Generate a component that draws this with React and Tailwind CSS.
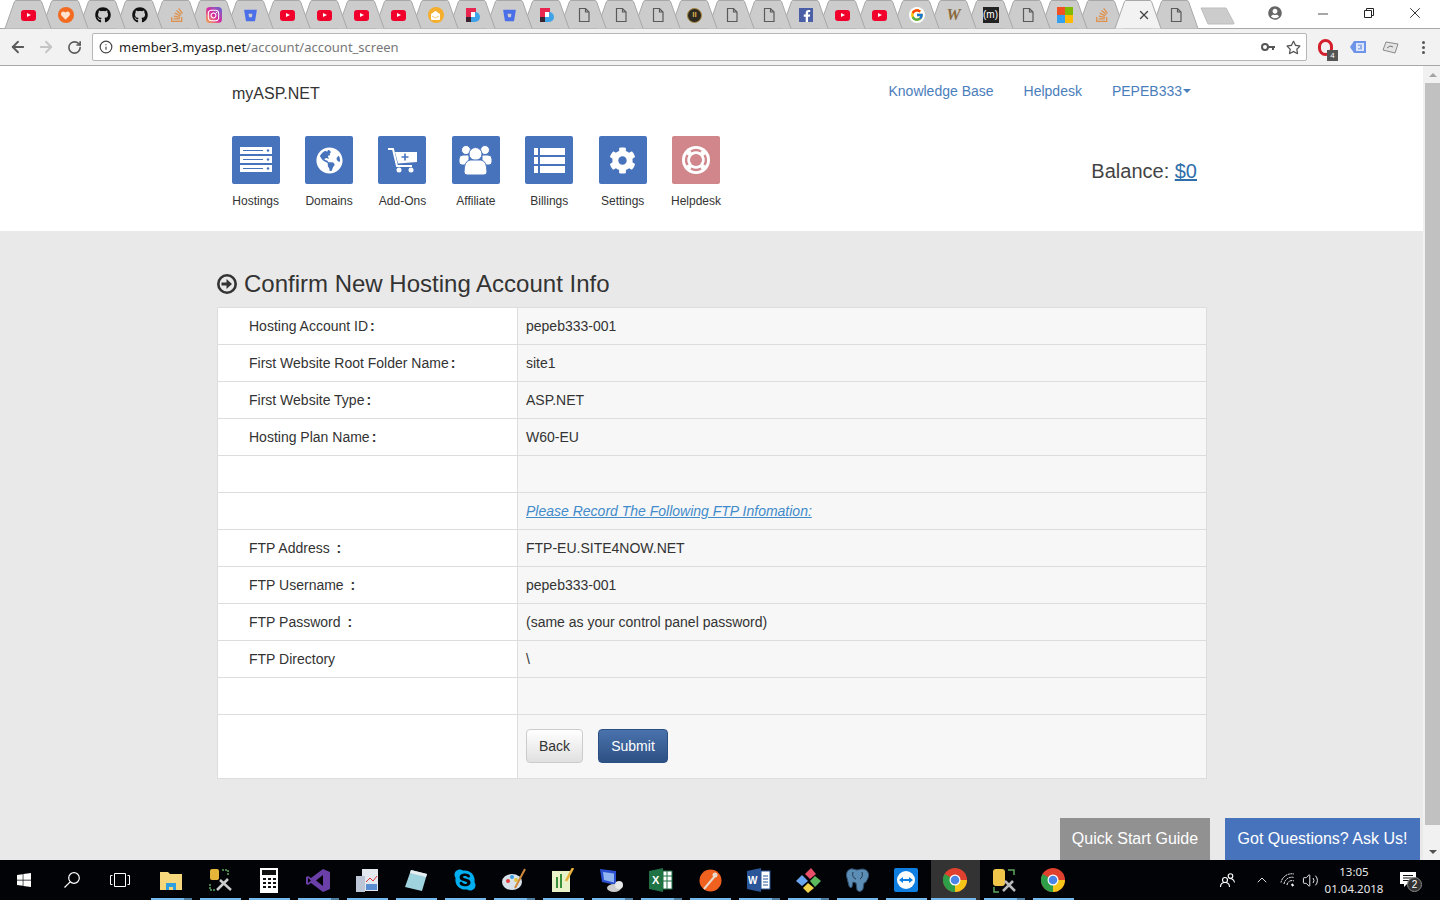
import { FaGithub, FaStackOverflow, FaInstagram, FaBitbucket, FaFacebookF, FaWindows, FaSkype, FaGlobeAmericas, FaCog, FaRegStar, FaUserCircle, FaHeart, FaEnvelopeOpen } from "react-icons/fa";
import { FcGoogle } from "react-icons/fc";
import { ArrowLeft, ArrowRight, RotateCw, Info, X, Minus, Volume2, ChevronUp } from "lucide-react";

// favicons for the tab strip
function Doc() {
  return (
    <svg width="16" height="16" viewBox="0 0 16 16" fill="none" stroke="#5a5a5a" strokeWidth="1.2">
      <path d="M3.5 1.5h6l3.5 3.5v9.5h-9.5z M9.5 1.5v3.5h3.5" />
    </svg>
  );
}

function Yt() {
  return (
    <div className="w-[15px] h-[11px] rounded-[3px] bg-[#f0002b] flex items-center justify-center">
      <div className="w-0 h-0 border-y-[2.5px] border-y-transparent border-l-[4px] border-l-white" />
    </div>
  );
}

function Dpd() {
  return (
    <svg width="16" height="16" viewBox="0 0 16 16">
      <rect x="1" y="1" width="10" height="9" fill="#e8264f" />
      <rect x="1" y="10" width="5" height="5" fill="#3a2430" />
      <path d="M6 5h4a5 5 0 0 1 0 10H6z" fill="#3fa3e8" />
      <rect x="6" y="5" width="4" height="5" fill="#fff" />
    </svg>
  );
}

function Favicon({ kind }) {
  if (kind === "yt") return <Yt />;
  if (kind === "doc") return <Doc />;
  if (kind === "dpd") return <Dpd />;
  if (kind === "gh") return <FaGithub size={16} className="text-[#111]" />;
  if (kind === "so") return <FaStackOverflow size={16} className="text-[#e0904a]" />;
  if (kind === "ig")
    return (
      <div className="w-4 h-4 rounded-[4px] bg-gradient-to-tr from-[#f7a32b] via-[#d6249f] to-[#4f5bd5] flex items-center justify-center">
        <FaInstagram size={13} className="text-white" />
      </div>
    );
  if (kind === "bb") return <FaBitbucket size={13} className="text-[#4a6fe8]" />;
  if (kind === "fb")
    return (
      <div className="w-[14px] h-[14px] bg-[#4a5fa5] flex items-end justify-end">
        <FaFacebookF size={12} className="text-white" />
      </div>
    );
  if (kind === "g")
    return (
      <div className="w-4 h-4 rounded-full bg-white flex items-center justify-center">
        <FcGoogle size={14} />
      </div>
    );
  if (kind === "heart")
    return (
      <div className="w-4 h-4 rounded-full bg-[#f26b21] flex items-center justify-center">
        <FaHeart size={9} className="text-[#ffe3cf]" />
      </div>
    );
  if (kind === "mail")
    return (
      <div className="w-4 h-4 rounded-full bg-[#f5ae2d] flex items-center justify-center">
        <FaEnvelopeOpen size={9} className="text-white" />
      </div>
    );
  if (kind === "coin")
    return (
      <div className="w-[15px] h-[15px] rounded-full bg-[#2d2a22] border border-[#a98a3a] flex items-center justify-center text-[8px] text-[#d8b24a] font-bold">
        II
      </div>
    );
  if (kind === "w")
    return <span className="text-[16px] leading-4 font-bold italic text-[#8a6a3c] [font-family:'Liberation_Serif',serif]">W</span>;
  if (kind === "m")
    return (
      <div className="w-4 h-4 bg-[#222] text-white text-[10px] leading-4 text-center [font-family:'Liberation_Sans',sans-serif]">(m)</div>
    );
  if (kind === "ms")
    return (
      <div className="grid grid-cols-2 w-4 h-4">
        <div className="bg-[#f25022]" />
        <div className="bg-[#7fba00]" />
        <div className="bg-[#33a0f0]" />
        <div className="bg-[#ffb900]" />
      </div>
    );
  return null;
}

const tabs = ["yt", "heart", "gh", "gh", "so", "ig", "bb", "yt", "yt", "yt", "yt", "mail", "dpd", "bb", "dpd", "doc", "doc", "doc", "coin", "doc", "doc", "fb", "yt", "yt", "g", "w", "m", "doc", "ms", "so", "active", "doc"];

function Tab({ kind, index }) {
  const active = kind === "active";
  return (
    <div className="relative w-[37px] h-[28px] flex items-center justify-center shrink-0" style={{ zIndex: active ? 60 : 50 - index }}>
      <svg className="absolute top-0 left-[-5px] overflow-visible" width="47" height="29" viewBox="0 0 47 29">
        <path d="M0 28.5 L9.5 1.5 Q10 0.5 11 0.5 H35 Q36 0.5 36.5 1.5 L46 28.5" fill={active ? "#f2f2f2" : "#cccccc"} stroke="#a8a8a8" />
      </svg>
      <div className="relative mt-[2px]">
        {active ? <X size={14} strokeWidth={2.4} className="ml-[10px] text-[#444]" /> : <Favicon kind={kind} />}
      </div>
    </div>
  );
}

function TabStrip() {
  return (
    <div className="h-[28px] shrink-0 bg-white flex items-start relative">
      <div className="flex pl-[10px]">
        {tabs.map((t, i) => (
          <Tab key={i} kind={t} index={i} />
        ))}
      </div>
      <svg className="ml-[6px] mt-[7px]" width="36" height="18" viewBox="0 0 36 18">
        <path d="M1 1 H26 L34 16 Q34.5 17 33 17 H8 Z" fill="#cccccc" stroke="#bdbdbd" strokeLinejoin="round" />
      </svg>
      <div className="flex-1 flex items-start justify-end text-[#444]">
        <FaUserCircle size={14} className="text-[#666] mt-[6px] mr-[33px]" />
        <Minus size={16} strokeWidth={1.2} className="mt-[6px] mr-[33px] text-[#222]" />
        <svg className="mt-[8px] mr-[32px]" width="10" height="10" viewBox="0 0 10 10" fill="none" stroke="#222">
          <path d="M0.5 2.5h7v7h-7z M2.5 2.5v-2h7v7h-2" />
        </svg>
        <X size={18} strokeWidth={1.2} className="mt-[4px] mr-[16px] text-[#222]" />
      </div>
    </div>
  );
}

function Toolbar() {
  return (
    <div className="h-[38px] shrink-0 bg-[#f2f2f2] border-y border-[#a8a8a8] flex items-center">
      <ArrowLeft size={18} strokeWidth={2.4} className="ml-[9px] text-[#5a5a5a]" />
      <ArrowRight size={18} strokeWidth={2.4} className="ml-[10px] text-[#c4c4c4]" />
      <RotateCw size={15} strokeWidth={2.6} className="ml-[12px] text-[#5a5a5a]" />
      <div className="ml-[10px] w-[1215px] h-[28px] bg-white border border-[#b6b6b6] rounded-[2px] flex items-center">
        <Info size={14} strokeWidth={2} className="ml-[6px] text-[#444]" />
        <div className="ml-[6px] mt-[1px] flex-1 text-[13px] text-[#222] [font-family:'Noto_Sans',sans-serif]">
          member3.myasp.net<span className="text-[#777]">/account/account_screen</span>
        </div>
        <svg className="mr-[10px]" width="14" height="8" viewBox="0 0 14 8">
          <circle cx="4" cy="4" r="3" fill="none" stroke="#555" strokeWidth="2" />
          <path d="M7 3h7v2h-1v2h-2V5H7z" fill="#555" />
        </svg>
        <FaRegStar size={15} className="text-[#555] mr-[5px] ml-[1px]" />
      </div>
      <div className="relative ml-[11px] w-[15px] h-[17px] rounded-full border-[3px] border-[#d3202c]">
        <div className="absolute left-[6px] top-[8px] w-[11px] h-[11px] bg-[#555] text-white text-[8px] leading-[11px] text-center">4</div>
      </div>
      <svg className="ml-[17px]" width="16" height="12" viewBox="0 0 16 12">
        <path d="M4 0h12v12H4L0 6z" fill="#6d94e8" />
        <rect x="6" y="2" width="8" height="8" fill="#dfe8fb" />
        <path d="M9 3.500v1.500M9 7v1.500M11 3.500v5" stroke="#4a74d0" />
      </svg>
      <svg className="ml-[16px]" width="17" height="13" viewBox="0 0 17 13">
        <path d="M4 1 L16 3 L13 12 L1 9 Z" fill="#e4e4e4" stroke="#8a8a8a" />
        <path d="M5 7 L8 5 L11 6" fill="none" stroke="#777" />
      </svg>
      <div className="ml-[23px] flex flex-col gap-[2px]">
        <div className="w-[3px] h-[3px] rounded-full bg-[#555]" />
        <div className="w-[3px] h-[3px] rounded-full bg-[#555]" />
        <div className="w-[3px] h-[3px] rounded-full bg-[#555]" />
      </div>
    </div>
  );
}

function ServerIcon() {
  return (
    <svg width="32" height="26" viewBox="0 0 32 26">
      {[0, 9, 18].map((y) => (
        <g key={y}>
          <rect x="0" y={y} width="32" height="7" fill="#fff" />
          <rect x="3" y={y + 3} width="20" height="1" fill="#4773bd" />
          <circle cx="28" cy={y + 3.5} r="1.2" fill="#4773bd" />
        </g>
      ))}
    </svg>
  );
}

function ListIcon() {
  return (
    <svg width="31" height="25" viewBox="0 0 31 25" fill="#fff">
      {[0, 9, 18].map((y) => (
        <g key={y}>
          <rect x="0" y={y} width="4" height="7" />
          <rect x="6" y={y} width="25" height="7" />
        </g>
      ))}
    </svg>
  );
}

function CartIcon() {
  return (
    <svg width="29" height="25" viewBox="0 0 29 25">
      <path d="M0 1h5l4 17h15" fill="none" stroke="#fff" strokeWidth="2" />
      <path d="M7 4h22v10l-19 1.500z" fill="#fff" />
      <path d="M17 5.500v7M13.500 9h7" stroke="#4773bd" strokeWidth="1.6" />
      <circle cx="11" cy="22" r="2.500" fill="#fff" />
      <circle cx="23" cy="22" r="2.500" fill="#fff" />
    </svg>
  );
}

function GroupIcon() {
  return (
    <svg width="33" height="30" viewBox="0 0 33 30" fill="#fff" stroke="#4773bd" strokeWidth="1">
      <circle cx="7" cy="5" r="4.500" />
      <circle cx="26" cy="5" r="4.500" />
      <path d="M0 14q0-4 4-4h6v10H3q-3 0-3-3zM33 14q0-4-4-4h-6v10h7q3 0 3-3z" />
      <circle cx="16.500" cy="9" r="6.500" />
      <path d="M5 27q0-11 6-12h11q6 1 6 12q0 3-3 3H8q-3 0-3-3z" />
    </svg>
  );
}

function RingIcon() {
  return (
    <svg width="28" height="28" viewBox="0 0 28 28">
      <circle cx="14" cy="14" r="14" fill="#fff" />
      <circle cx="14" cy="14" r="6" fill="#d0868a" />
      <path d="M9 5.500a10 10 0 0 1 10 0M9 22.500a10 10 0 0 0 10 0M5.500 9a10 10 0 0 0 0 10M22.500 9a10 10 0 0 1 0 10" fill="none" stroke="#d0868a" strokeWidth="2.400" />
    </svg>
  );
}

const navItems = [
  { label: "Hostings", icon: <ServerIcon /> },
  { label: "Domains", icon: <FaGlobeAmericas size={27} /> },
  { label: "Add-Ons", icon: <CartIcon /> },
  { label: "Affiliate", icon: <GroupIcon /> },
  { label: "Billings", icon: <ListIcon /> },
  { label: "Settings", icon: <FaCog size={27} /> },
  { label: "Helpdesk", icon: <RingIcon />, pink: true },
];

function Header() {
  return (
    <div className="bg-white h-[165px] shrink-0">
      <div className="h-[70px] flex items-start justify-between pl-[232px] pr-[232px]">
        <div className="pt-[18px] text-[16px] leading-5 text-[#333]">myASP.NET</div>
        <div className="pt-[15px] flex gap-[30px] text-[14px] leading-5 text-[#4a7ebb]">
          <span>Knowledge Base</span>
          <span>Helpdesk</span>
          <span className="flex items-center">
            PEPEB333
            <span className="ml-[1px] w-0 h-0 border-x-[4px] border-x-transparent border-t-[4px] border-t-[#4a7ebb]" />
          </span>
        </div>
      </div>
      <div className="flex items-start justify-between pl-[219px] pr-[226px]">
        <div className="flex">
          {navItems.map((n) => (
            <div key={n.label} className="w-[73.4px] flex flex-col items-center">
              <div className={`w-[48px] h-[48px] rounded-[2px] flex items-center justify-center text-white ${n.pink ? "bg-[#d0868a]" : "bg-[#4773bd]"}`}>
                {n.icon}
              </div>
              <div className="mt-[9px] text-[12px] leading-4 text-[#333] whitespace-nowrap">{n.label}</div>
            </div>
          ))}
        </div>
        <div className="mt-[21px] text-[20px] leading-7 text-[#444]">
          Balance: <span className="underline text-[#2f6ea8]">$0</span>
        </div>
      </div>
    </div>
  );
}

const rows = [
  ["Hosting Account ID", ":", "pepeb333-001"],
  ["First Website Root Folder Name", ":", "site1"],
  ["First Website Type", ":", "ASP.NET"],
  ["Hosting Plan Name", ":", "W60-EU"],
  ["", "", ""],
  ["", "", "link"],
  ["FTP Address", " :", "FTP-EU.SITE4NOW.NET"],
  ["FTP Username", " :", "pepeb333-001"],
  ["FTP Password", " :", "(same as your control panel password)"],
  ["FTP Directory", "", "\\"],
  ["", "", ""],
];

function InfoTable() {
  return (
    <div className="w-[990px] border border-[#dddddd] text-[14px] text-[#333]">
      {rows.map(([label, colon, value], i) => (
        <div key={i} className="flex h-[37px] border-b border-[#dddddd]">
          <div className="w-[300px] shrink-0 bg-white border-r border-[#dddddd] pl-[31px] flex items-center whitespace-pre">
            {label}
            {colon && <span className={`font-bold ${colon === ":" ? "ml-[2px]" : "ml-[3px]"}`}>{colon}</span>}
          </div>
          <div className="flex-1 bg-[#f7f7f7] pl-[8px] flex items-center">
            {value === "link" ? <span className="italic underline text-[#428bca]">Please Record The Following FTP Infomation:</span> : value}
          </div>
        </div>
      ))}
      <div className="flex h-[63px]">
        <div className="w-[300px] shrink-0 bg-white border-r border-[#dddddd]" />
        <div className="flex-1 bg-[#f7f7f7] pl-[8px] pb-[1px] flex items-center gap-[15px]">
          <button className="w-[57px] h-[34px] rounded-[4px] border border-[#cccccc] bg-gradient-to-b from-white to-[#e0e0e0] text-[#333]">Back</button>
          <button className="w-[70px] h-[34px] rounded-[4px] border border-[#2b4f81] bg-gradient-to-b from-[#4a72ac] to-[#2d5184] text-white">Submit</button>
        </div>
      </div>
    </div>
  );
}

function Scrollbar() {
  return (
    <div className="w-[17px] shrink-0 bg-[#f1f1f1] flex flex-col items-center pl-[2px]">
      <div className="h-[17px] flex items-center justify-center">
        <div className="w-0 h-0 border-x-[4px] border-x-transparent border-b-[4px] border-b-[#a3a3a3]" />
      </div>
      <div className="w-full h-[742px] bg-[#c1c1c1]" />
      <div className="flex-1 flex items-end pb-[6px]">
        <div className="w-0 h-0 border-x-[4px] border-x-transparent border-t-[4px] border-t-[#505050]" />
      </div>
    </div>
  );
}

function Chrome() {
  return (
    <svg width="24" height="24" viewBox="0 0 24 24">
      <circle cx="12" cy="12" r="12" fill="#e0412f" />
      <path d="M12 12L1.600 6A12 12 0 0 0 12 24z" fill="#2f9e48" />
      <path d="M12 12h12A12 12 0 0 1 12 24z" fill="#f5c518" />
      <circle cx="12" cy="12" r="5.500" fill="#fff" />
      <circle cx="12" cy="12" r="4.300" fill="#4a86e8" />
    </svg>
  );
}

// taskbar app icons, `seg` marks apps with more than one window open
const taskIcons = [
  { seg: true, icon: <svg width="22" height="20" viewBox="0 0 22 20"><path d="M0 2h8l2 2h12v16H0z" fill="#f6d77c" /><path d="M6 13h10v7h-3v-3H9v3H6z" fill="#2f9fe0" /></svg> },
  { icon: <svg width="24" height="24" viewBox="0 0 24 24"><rect x="2" y="1" width="9" height="11" rx="2" fill="#e5b53a" /><path d="M14 2h6v6M2 16v6h6" fill="none" stroke="#5fa65f" strokeWidth="1.5" strokeDasharray="2 1" /><path d="M9 22L20 11M12 12l11 10" stroke="#ccc" strokeWidth="2.5" /></svg> },
  { icon: <svg width="18" height="25" viewBox="0 0 18 25"><rect width="18" height="25" fill="#fff" /><rect x="2" y="2" width="14" height="5" fill="#111" />{[10, 14, 18].map((y) => [3, 8, 13].map((x) => <rect key={`${x}${y}`} x={x} y={y} width="3" height="2" fill="#111" />))}</svg> },
  { seg: true, icon: <svg width="24" height="25" viewBox="0 0 24 25"><path d="M17 1l7 3v17l-7 3L5 15l-3 2-2-1V9l2-1 3 2z" fill="#6a3fa8" /><path d="M17 7v11l-7-5.500z M2 10v5l3-2.500z" fill="#000" /></svg> },
  { icon: <svg width="22" height="25" viewBox="0 0 22 25"><rect x="6" y="1" width="16" height="22" fill="#e4e8ef" /><rect x="0" y="8" width="9" height="16" fill="#bcc6d6" /><path d="M10 14l4-4 3 3 4-5" stroke="#d33" fill="none" /><rect x="10" y="16" width="11" height="6" fill="#5b8ed0" /></svg> },
  { icon: <svg width="22" height="22" viewBox="0 0 22 22"><path d="M6 1l16 4-5 17L0 18z" fill="#9fd3de" /><path d="M6 1l16 4-1 3L5 4z" fill="#e8eef0" /></svg> },
  { icon: <FaSkype size={24} className="text-[#00aff0]" /> },
  { seg: true, icon: <svg width="24" height="24" viewBox="0 0 24 24"><ellipse cx="10" cy="14" rx="10" ry="8" fill="#d8e2ea" /><circle cx="6" cy="13" r="2" fill="#e23c3c" /><circle cx="10" cy="9" r="2" fill="#3c9de2" /><circle cx="14" cy="12" r="2" fill="#e2c23c" /><path d="M23 1L13 20" stroke="#d08a3a" strokeWidth="2" /></svg> },
  { icon: <svg width="22" height="24" viewBox="0 0 22 24"><rect y="3" width="18" height="21" fill="#e9f2c8" /><rect x="4" y="9" width="2" height="11" fill="#3a8f3a" /><rect x="8" y="6" width="2" height="14" fill="#3a8f3a" /><path d="M21 0L14 13" stroke="#e8b23a" strokeWidth="2.5" /></svg> },
  { seg: true, icon: <svg width="24" height="24" viewBox="0 0 24 24"><path d="M0 1l16 2v14L2 14z" fill="#2a4fd0" /><path d="M3 4l11 1.500v9L4 12z" fill="#8fb4f0" /><ellipse cx="14" cy="20" rx="7" ry="4" fill="#ccc" /><circle cx="19" cy="17" r="4" fill="#e8e8e8" /></svg> },
  { seg: true, icon: <svg width="24" height="24" viewBox="0 0 24 24"><path d="M0 3l14-3v24L0 21z" fill="#1f7244" /><rect x="14" y="3" width="9" height="18" fill="#fff" stroke="#1f7244" /><path d="M14 8h9M14 13h9M18 3v18" stroke="#1f7244" /><text x="3" y="16" fontSize="11" fontWeight="700" fill="#fff" fontFamily="Liberation Sans">X</text></svg> },
  { icon: <svg width="23" height="23" viewBox="0 0 23 23"><circle cx="11.500" cy="11.500" r="11" fill="#f0601f" /><path d="M5 20L16 7" stroke="#e9d9cc" strokeWidth="2" /><circle cx="16" cy="6" r="2.500" fill="#e9d9cc" /></svg> },
  { seg: true, icon: <svg width="24" height="24" viewBox="0 0 24 24"><path d="M0 3l14-3v24L0 21z" fill="#2a5699" /><rect x="14" y="3" width="9" height="18" fill="#fff" stroke="#2a5699" /><path d="M16 8h5M16 11h5M16 14h5M16 17h5" stroke="#2a5699" /><text x="1" y="16" fontSize="10" fontWeight="700" fill="#fff" fontFamily="Liberation Sans">W</text></svg> },
  { seg: true, icon: <svg width="25" height="25" viewBox="0 0 25 25"><path d="M15 0l5 6-6 5-5-5z" fill="#e8506a" /><path d="M6 7l6 6-6 5-6-5z" fill="#6aa5f0" /><path d="M19 8l6 5-6 6-5-6z" fill="#5cb85c" /><path d="M12 15l6 5-6 5-5-5z" fill="#f0d24a" /></svg> },
  { icon: <svg width="25" height="25" viewBox="0 0 25 25"><path d="M2 10C0 4 4 0 8 1l4 1 5-1c5 0 8 4 6 9l-2 4-2 1-1 6c-1 3-5 3-6 1l-1-7-3-1-1 5c-1 1-2 1-3-1z" fill="#5b8db5" stroke="#2f4f6f" /><path d="M8 4c-1 3 0 6 3 7M17 4c1 3 0 6-2 7" fill="none" stroke="#23384f" /></svg> },
  { icon: <svg width="24" height="24" viewBox="0 0 24 24"><rect width="24" height="24" rx="2" fill="#0e7fe0" /><circle cx="12" cy="12" r="9" fill="#fff" /><path d="M5 12l4-3v2h6V9l4 3-4 3v-2H9v2z" fill="#0e7fe0" /></svg> },
  { active: true, icon: <Chrome /> },
  { seg: true, icon: <svg width="24" height="25" viewBox="0 0 24 25"><rect x="1" y="1" width="12" height="17" rx="3" fill="#f0c54a" /><path d="M16 2h6v5M2 19v5h5" fill="none" stroke="#5fa65f" strokeWidth="1.5" /><path d="M11 23l10-10M13 13l10 10" stroke="#bbb" strokeWidth="2.5" /></svg> },
  { icon: <Chrome /> },
];

function Taskbar() {
  return (
    <div className="h-[40px] shrink-0 bg-[#020307] flex items-center text-white relative">
      <div className="w-[48px] flex justify-center">
        <FaWindows size={16} />
      </div>
      <div className="w-[48px] flex justify-center">
        <svg width="16" height="16" viewBox="0 0 16 16" fill="none" stroke="#fff" strokeWidth="1.2">
          <circle cx="10" cy="6" r="5.300" />
          <path d="M6.200 9.800L0.500 15.500" />
        </svg>
      </div>
      <div className="w-[48px] flex justify-center">
        <svg width="20" height="14" viewBox="0 0 20 14" fill="none" stroke="#fff">
          <path d="M2.500 2.500H0.500v9h2M17.500 2.500h2v9h-2M4.500 0.500h11v13h-11z" />
        </svg>
      </div>
      <div className="flex ml-[2.500px]">
        {taskIcons.map((t, i) => (
          <div key={i} className={`relative w-[49px] h-[40px] flex items-center justify-center ${t.active ? "bg-[#333333]" : ""}`}>
            {t.icon}
            <div className={`absolute bottom-0 h-[2px] bg-[#76b9ed] ${t.active ? "left-0 w-[45px]" : "left-[4px] w-[41px]"}`}>
              {t.seg && <div className="absolute right-0 top-0 w-[8px] h-[2px] bg-[#4f7ea3]" />}
            </div>
          </div>
        ))}
      </div>
      <div className="flex-1 flex items-center justify-end">
        <svg className="mr-[19px]" width="15" height="15" viewBox="0 0 15 15" fill="none" stroke="#fff" strokeWidth="1.1">
          <circle cx="5" cy="7" r="2.500" />
          <path d="M0.500 14c0-3 2-4.500 4.500-4.500s4.500 1.500 4.500 4.500" />
          <circle cx="10.500" cy="3" r="2.300" />
          <path d="M9.500 5.500c2.500 0 4.500 1 5 4" />
        </svg>
        <ChevronUp size={16} strokeWidth={1.3} className="mr-[10px]" />
        <svg className="mr-[7px]" width="15" height="14" viewBox="0 0 15 14" fill="none" stroke="#fff" strokeWidth="1" strokeDasharray="2 0.700">
          <path d="M1 9.500A11 11 0 0 1 14 1" />
          <path d="M4 11A8 8 0 0 1 14 4.500" />
          <path d="M7 12A5 5 0 0 1 14 8" />
          <circle cx="12.500" cy="12" r="1" fill="#fff" />
        </svg>
        <Volume2 size={17} strokeWidth={1.3} className="mr-[5px]" />
        <div className="w-[60px] text-center text-[11.500px] leading-[17px] text-[#e8e8e8] [font-family:'Noto_Sans',sans-serif]">
          <div>13:05</div>
          <div>01.04.2018</div>
        </div>
        <div className="relative ml-[16px] mr-[24px]">
          <svg width="16" height="17" viewBox="0 0 16 17">
            <path d="M0 0h16v12H7l-3 3v-3H0z" fill="#fff" />
            <path d="M3 3.500h10M3 6h10M3 8.500h6" stroke="#111" />
          </svg>
          <div className="absolute left-[7px] top-[5px] w-[15px] h-[15px] rounded-full bg-[#333] border border-[#888] text-[10px] leading-[13px] text-center">2</div>
        </div>
      </div>
    </div>
  );
}

export default function App() {
  return (
    <div className="w-[1440px] h-[900px] overflow-hidden flex flex-col bg-white [font-family:'Liberation_Sans',Arial,sans-serif]">
      <TabStrip />
      <Toolbar />
      <div className="flex-1 min-h-0 flex">
        <div className="flex-1 min-w-0 flex flex-col bg-[#e9e9e9] relative">
          <Header />
          <div className="pl-[217px]">
            <h1 className="pt-[39px] mb-[9px] flex items-center gap-[7px] text-[24px] leading-7 text-[#333]">
              <svg width="20" height="20" viewBox="0 0 20 20">
                <circle cx="10" cy="10" r="8.700" fill="none" stroke="#333" strokeWidth="2.600" />
                <path d="M4.500 8.500h5V5l5.500 5-5.500 5v-3.500h-5z" fill="#333" />
              </svg>
              Confirm New Hosting Account Info
            </h1>
            <InfoTable />
          </div>
          <div className="absolute bottom-0 left-[1060px] w-[150px] h-[42px] bg-[#919191] text-white text-[16px] flex items-center justify-center">Quick Start Guide</div>
          <div className="absolute bottom-0 left-[1225px] w-[195px] h-[42px] bg-[#4773bd] text-white text-[16px] flex items-center justify-center">Got Questions? Ask Us!</div>
        </div>
        <Scrollbar />
      </div>
      <Taskbar />
    </div>
  );
}
